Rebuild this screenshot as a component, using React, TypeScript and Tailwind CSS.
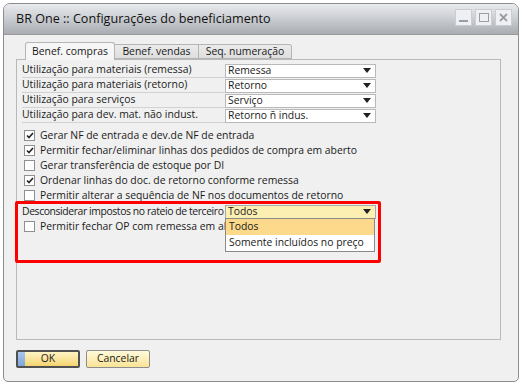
import React from 'react';

const rows = [
  { label: 'Utilização para materiais (remessa)', value: 'Remessa' },
  { label: 'Utilização para materiais (retorno)', value: 'Retorno' },
  { label: 'Utilização para serviços', value: 'Serviço' },
  { label: 'Utilização para dev. mat. não indust.', value: 'Retorno ñ indus.' },
];

const checks = [
  { label: 'Gerar NF de entrada e dev.de NF de entrada', checked: true },
  { label: 'Permitir fechar/eliminar linhas dos pedidos de compra em aberto', checked: true },
  { label: 'Gerar transferência de estoque por DI', checked: false },
  { label: 'Ordenar linhas do doc. de retorno conforme remessa', checked: true },
  { label: 'Permitir alterar a sequência de NF nos documentos de retorno', checked: false },
];

function Arrow() {
  return (
    <svg width="8" height="5" viewBox="0 0 8 5" className="shrink-0">
      <path d="M0 0 H8 L4 5 Z" fill="#222" />
    </svg>
  );
}

function Combo({ value, yellow }: { value: string; yellow?: boolean }) {
  return (
    <div
      className={`w-[151px] h-[14px] flex items-center justify-between pl-[2px] pr-[4px] border ${
        yellow ? 'bg-[#fbf0b2] border-[#a9a9a9]' : 'bg-white border-[#b9b9b9]'
      }`}
    >
      <span className="leading-none whitespace-nowrap">{value}</span>
      <Arrow />
    </div>
  );
}

function Check({ checked }: { checked: boolean }) {
  return (
    <div className="w-[11px] h-[11px] border border-[#8f8f8f] bg-white flex items-center justify-center shrink-0">
      {checked && (
        <svg width="8" height="7" viewBox="0 0 8 7">
          <path d="M1 3.5 L3 5.5 L7 1" fill="none" stroke="#222" strokeWidth="1.6" />
        </svg>
      )}
    </div>
  );
}

function WinButton({ children }: { children: React.ReactNode }) {
  return (
    <div className="w-[17px] h-[17px] bg-[#eef0f3] border border-[#c9ccd1] flex items-center justify-center">
      {children}
    </div>
  );
}

export default function App() {
  return (
    <div
      className="w-[522px] h-[384px] bg-white pt-[3px] pl-[3px] text-[10.4px] text-[#1a1a1a] whitespace-nowrap"
      style={{ fontFamily: '"Open Sans", "Noto Sans", sans-serif' }}
    >
      <div className="w-[516px] h-[379px] flex flex-col border border-[#8c8c8c] rounded-t-[7px] rounded-b-[5px] overflow-hidden bg-[#f0f0f0]">
        {/* Title bar */}
        <div className="h-[31px] flex items-center justify-between pl-[12px] pr-[6px] bg-gradient-to-b from-[#e9ebee] via-[#c9ccd1] to-[#a9acb1] border-b border-[#9a9a9a]">
          <span className="text-[12.6px] text-[#111]">BR One :: Configurações do beneficiamento</span>
          <div className="flex gap-[3px] -mt-[4px]">
            <WinButton>
              <div className="w-[9px] h-[2px] bg-[#9a9da2] mt-[8px]" />
            </WinButton>
            <WinButton>
              <div className="w-[10px] h-[9px] border border-[#9a9da2]" />
            </WinButton>
            <WinButton>
              <svg width="9" height="9" viewBox="0 0 9 9">
                <path d="M1 1 L8 8 M8 1 L1 8" stroke="#9a9da2" strokeWidth="1.8" />
              </svg>
            </WinButton>
          </div>
        </div>

        {/* Body */}
        <div className="flex-1 flex flex-col pl-[12px] pr-[17px] pt-[7px]">
          {/* Tabs */}
          <div className="flex items-end pl-[9px] h-[17px] relative z-10">
            <div className="w-[90px] h-[18px] bg-[#f6f6f6] border border-b-0 border-[#b5b5b5] rounded-t-[3px] flex items-center justify-center -mb-[1px]">
              Benef. compras
            </div>
            <div className="w-[84px] h-[15px] bg-gradient-to-b from-[#ebebeb] to-[#dedede] border border-l-0 border-[#b5b5b5] flex items-center justify-center">
              Benef. vendas
            </div>
            <div className="w-[93px] h-[15px] bg-gradient-to-b from-[#ebebeb] to-[#dedede] border border-l-0 border-[#b5b5b5] rounded-tr-[3px] flex items-center justify-center">
              Seq. numeração
            </div>
          </div>

          {/* Panel */}
          <div className="relative h-[281px] border border-[#b9b9b9] pl-[5px] pt-[3px]">
            {rows.map((r) => (
              <div key={r.label} className="flex items-center h-[15px]">
                <div className="w-[203px] h-[15px] flex items-center border-b border-[#d2d2d2]">{r.label}</div>
                <Combo value={r.value} />
              </div>
            ))}

            <div className="mt-[5px]">
              {checks.map((c) => (
                <div key={c.label} className="flex items-center gap-[5px] h-[15px] pl-[2px]">
                  <Check checked={c.checked} />
                  <span>{c.label}</span>
                </div>
              ))}
            </div>

            <div className="flex items-center h-[15px] mt-[1px]">
              <div className="w-[203px] shrink-0 tracking-[-0.4px]">Desconsiderar impostos no rateio de terceiro</div>
              <div className="relative">
                <Combo value="Todos" yellow />
                <div className="absolute left-0 top-[13px] w-[150px] bg-white border border-[#8a8a8a] z-20">
                  <div className="h-[16px] flex items-center pl-[3px] bg-[#fcd98b]">Todos</div>
                  <div className="h-[16px] flex items-center pl-[3px]">Somente incluídos no preço</div>
                </div>
              </div>
            </div>
            <div className="flex items-center gap-[5px] h-[15px] pl-[2px]">
              <Check checked={false} />
              <span>Permitir fechar OP com remessa em aberto</span>
            </div>

            <div className="absolute left-[-2px] top-[141px] w-[366px] h-[62px] border-[3px] border-[#ff0000] rounded-[2px] z-30" />
          </div>

          {/* Buttons */}
          <div className="flex gap-[6px] mt-[10px]">
            <div className="relative w-[64px] h-[18px] border-2 border-[#505050] rounded-[2px] bg-gradient-to-b from-[#fff4c4] to-[#f4d46e] flex items-center justify-center overflow-hidden">
              <div className="absolute left-0 top-0 bottom-0 w-[7px] bg-gradient-to-b from-[#a9c8ee] to-[#7fa6d9]" />
              <span>OK</span>
            </div>
            <div className="w-[64px] h-[18px] border border-[#8d8d8d] rounded-[2px] bg-gradient-to-b from-[#fffadb] to-[#f9e394] flex items-center justify-center">
              Cancelar
            </div>
          </div>
        </div>
      </div>
    </div>
  );
}
